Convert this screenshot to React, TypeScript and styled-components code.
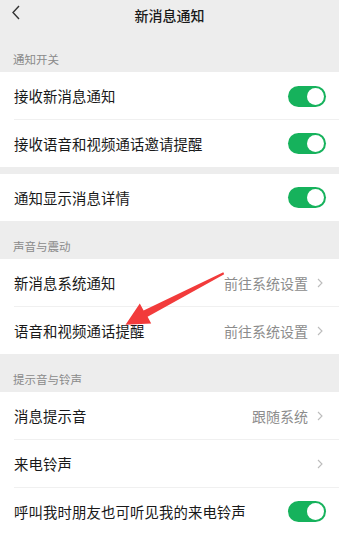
import styled, { createGlobalStyle } from "styled-components";

const GlobalStyle = createGlobalStyle`
  html, body {
    margin: 0;
    padding: 0;
    background: #ededed;
  }
  * {
    box-sizing: border-box;
  }
`;

const Page = styled.div`
  position: relative;
  width: 339px;
  height: 535px;
  overflow: hidden;
  background: #ededed;
  font-family: "Noto Sans CJK SC", "Noto Sans", sans-serif;
  color: #191919;
`;

const NavBar = styled.div`
  position: relative;
  height: 34px;
  display: flex;
  align-items: flex-start;
  justify-content: center;
  padding-top: 5px;
`;

const BackButton = styled.div`
  position: absolute;
  left: 12px;
  top: 5px;
  display: flex;
`;

const NavTitle = styled.div`
  font-size: 14px;
  font-weight: 500;
  line-height: 20px;
`;

const SectionLabel = styled.div`
  height: 38px;
  display: flex;
  align-items: flex-end;
  padding: 0 0 5px 13px;
  font-size: 11.5px;
  line-height: 16px;
  color: #8a8a8a;
`;

const Group = styled.div<{ $gap?: boolean }>`
  background: #fff;
  margin-top: ${(p) => (p.$gap ? "7px" : "0")};
`;

const Row = styled.div<{ $last?: boolean }>`
  position: relative;
  height: ${(p) => (p.$last ? "47px" : "48px")};
  display: flex;
  align-items: center;
  padding: 0 14px 0 14px;
  &::after {
    content: "";
    display: ${(p) => (p.$last ? "none" : "block")};
    position: absolute;
    left: 14px;
    right: 0;
    bottom: 0;
    height: 1px;
    background: #f0f0f0;
  }
`;

const RowTitle = styled.div`
  flex: 1;
  font-size: 14.4px;
  line-height: 20px;
  letter-spacing: 0.1px;
`;

const RowValue = styled.div`
  font-size: 14px;
  line-height: 20px;
  color: #8c8c8c;
  margin-right: 9px;
`;

const Chevron = styled.div`
  display: flex;
  margin-right: 2px;
`;

const Toggle = styled.div<{ $on: boolean }>`
  position: relative;
  width: 38px;
  height: 21px;
  border-radius: 11px;
  background: ${(p) => (p.$on ? "#16b25c" : "#e5e5e5")};
  margin-right: -1px;
`;

const Knob = styled.div<{ $on: boolean }>`
  position: absolute;
  top: 2px;
  left: ${(p) => (p.$on ? "19px" : "2px")};
  width: 17px;
  height: 17px;
  border-radius: 50%;
  background: #fff;
`;

const Arrow = styled.svg`
  position: absolute;
  left: 0;
  top: 0;
  pointer-events: none;
`;

const ChevronIcon = () => (
  <svg width="6" height="10" viewBox="0 0 6 10">
    <path d="M1 1 L5 5 L1 9" fill="none" stroke="#bcbcbc" strokeWidth="1.1" />
  </svg>
);

type Item = {
  title: string;
  value?: string;
  link?: boolean;
  toggle?: boolean;
};

const SettingRow = ({ item, last }: { item: Item; last?: boolean }) => (
  <Row $last={last}>
    <RowTitle>{item.title}</RowTitle>
    {item.value && <RowValue>{item.value}</RowValue>}
    {item.link && (
      <Chevron>
        <ChevronIcon />
      </Chevron>
    )}
    {item.toggle && (
      <Toggle $on>
        <Knob $on />
      </Toggle>
    )}
  </Row>
);

const groups: { label?: string; items: Item[] }[] = [
  {
    label: "通知开关",
    items: [
      { title: "接收新消息通知", toggle: true },
      { title: "接收语音和视频通话邀请提醒", toggle: true },
    ],
  },
  { items: [{ title: "通知显示消息详情", toggle: true }] },
  {
    label: "声音与震动",
    items: [
      { title: "新消息系统通知", value: "前往系统设置", link: true },
      { title: "语音和视频通话提醒", value: "前往系统设置", link: true },
    ],
  },
  {
    label: "提示音与铃声",
    items: [
      { title: "消息提示音", value: "跟随系统", link: true },
      { title: "来电铃声", link: true },
      { title: "呼叫我时朋友也可听见我的来电铃声", toggle: true },
    ],
  },
];

const App = () => {
  return (
    <Page>
      <GlobalStyle />
      <NavBar>
        <BackButton>
          <svg width="8" height="15" viewBox="0 0 8 15">
            <path d="M7 1 L1 7.5 L7 14" fill="none" stroke="#333" strokeWidth="1.4" />
          </svg>
        </BackButton>
        <NavTitle>新消息通知</NavTitle>
      </NavBar>
      {groups.map((g, gi) => (
        <div key={gi}>
          {g.label && <SectionLabel>{g.label}</SectionLabel>}
          <Group $gap={!g.label}>
            {g.items.map((it, i) => (
              <SettingRow key={it.title} item={it} last={i === g.items.length - 1} />
            ))}
          </Group>
        </div>
      ))}
      {/* red annotation arrow drawn over the list */}
      <Arrow width="339" height="535" viewBox="0 0 339 535">
        <polygon
          points="223.3,272.3 143.6,310.4 139.8,303.6 125.5,324.8 151.2,323.4 147.6,316.8 224.2,274.3"
          fill="#f23b3b"
        />
      </Arrow>
    </Page>
  );
};

export default App;
